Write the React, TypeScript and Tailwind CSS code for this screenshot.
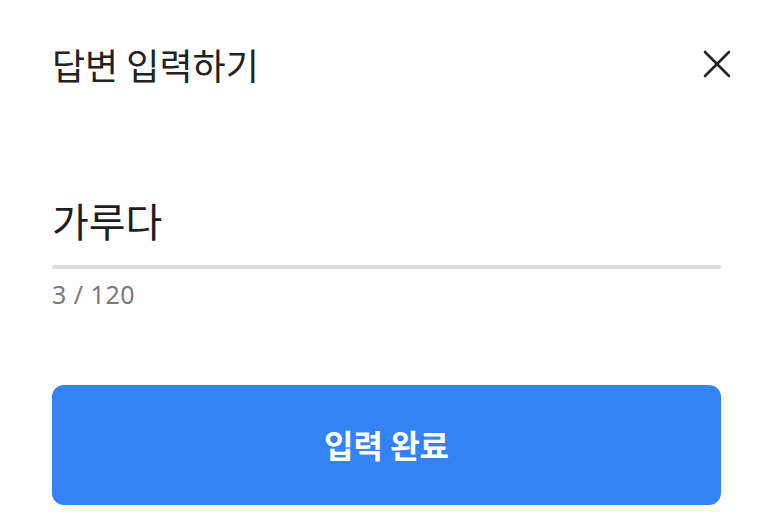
export default function App() {
  const font = { fontFamily: '"Noto Sans CJK KR", "Noto Sans", sans-serif' }
  return (
    <div className="w-[773px] h-[524px] bg-white px-[52px] pt-[43px]" style={font}>
      <div className="h-[42px] flex items-center justify-between">
        <h1 className="text-[36px] leading-[42px] text-[#222222] font-normal">답변 입력하기</h1>
        <svg width="28" height="28" viewBox="0 0 28 28" className="mr-[-10px]">
          <path d="M2 2 L26 26 M26 2 L2 26" stroke="#222222" strokeWidth="2.6" strokeLinecap="round" />
        </svg>
      </div>
      <div className="mt-[111px] text-[40px] leading-[48px] text-[#1e1e1e]">가루다</div>
      <div className="mt-[21px] h-[4px] rounded-full bg-[#dcdce2]"></div>
      <div className="mt-[10px] text-[25px] leading-[30px] text-[#7a7a7a] tracking-[0.5px] font-['Noto_Sans',sans-serif]">3 / 120</div>
      <button className="mt-[76px] w-full h-[120px] rounded-[12px] bg-[#3483f5] text-white text-[32px] font-bold pb-[3px]">
        입력 완료
      </button>
    </div>
  )
}
